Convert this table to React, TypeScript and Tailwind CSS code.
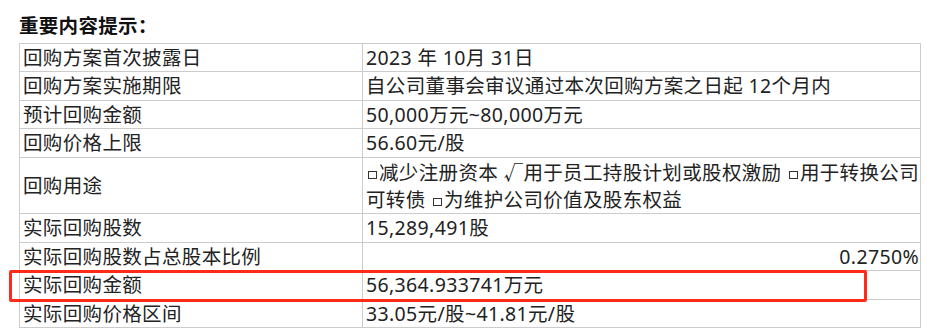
import React from "react"

const font = {
  fontFamily: '"Noto Sans", "Noto Sans CJK SC", sans-serif',
}

function Box() {
  return (
    <span className="inline-block w-[9px] h-[8px] border border-[#333] mx-[2px] align-[1px]" />
  )
}

type Row = { label: string; value: React.ReactNode; right?: boolean }

const rows: Row[] = [
  { label: "回购方案首次披露日", value: "2023 年 10月 31日" },
  { label: "回购方案实施期限", value: "自公司董事会审议通过本次回购方案之日起 12个月内" },
  { label: "预计回购金额", value: "50,000万元~80,000万元" },
  { label: "回购价格上限", value: "56.60元/股" },
  {
    label: "回购用途",
    value: (
      <>
        <span className="whitespace-nowrap">
          <Box />
          减少注册资本 <span style={{ fontFamily: '"Noto Sans CJK SC", sans-serif' }}>√</span>用于员工持股计划或股权激励 <Box />
          用于转换公司
        </span>
        <br />
        <span className="whitespace-nowrap">
          可转债 <Box />
          为维护公司价值及股东权益
        </span>
      </>
    ),
  },
  { label: "实际回购股数", value: "15,289,491股" },
  { label: "实际回购股数占总股本比例", value: "0.2750%", right: true },
  { label: "实际回购金额", value: "56,364.933741万元" },
  { label: "实际回购价格区间", value: "33.05元/股~41.81元/股" },
]

export default function App() {
  return (
    <div className="relative bg-white w-[925px] h-[335px] pl-[19px] text-[#222]" style={font}>
      <div className="pt-[12px] pb-[4px] text-[19.5px] leading-[27px] font-bold text-[#111] tracking-[0.3px]">
        重要内容提示：
      </div>
      <table className="border-collapse w-[902px] text-[19.5px] leading-[27.4px] tracking-[0.35px]">
        <tbody>
          {rows.map((r) => (
            <tr key={r.label}>
              <td className="w-[343px] border border-[#cccccc] pl-[3px] align-middle whitespace-nowrap">
                {r.label}
              </td>
              <td
                className={
                  r.right
                    ? "border border-[#cccccc] pr-[1px] text-right align-middle"
                    : "border border-[#cccccc] pl-[3px] align-middle"
                }
              >
                {r.value}
              </td>
            </tr>
          ))}
        </tbody>
      </table>
      <div className="absolute left-[9px] top-[270px] w-[858px] h-[32px] border-[3px] border-[#ff2a1a] rounded-[2px]" />
    </div>
  )
}
